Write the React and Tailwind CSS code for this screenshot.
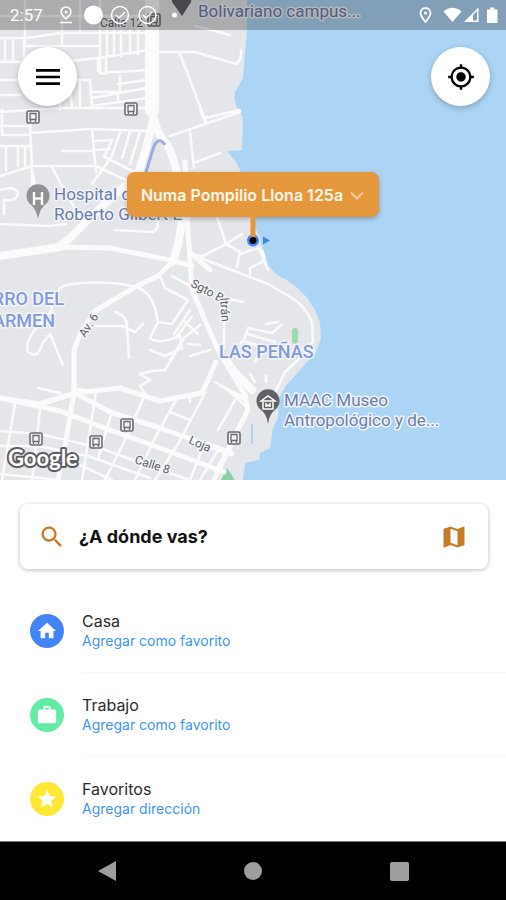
import React from "react";
import { MdHome, MdMap, MdMenu, MdMyLocation, MdSearch, MdStar, MdWork } from "react-icons/md";

const minorRoads = [
  // north-west blocks
  "M0 38H28L60 33H147M0 62H60L98 58L148 50M62 46H98M62 8V46H25V0M5 38V60M13 38V60M24 38V60M0 16H147M80 0V30M100 0V72M107 30V56M114 30V56M121 30V56M130 30V54M138 30V54",
  "M98 58V70Q100 76 107 72H118L147 70M106 58V74M78 80H90L92 108M80 82V106M70 92L72 108M120 76V92H92M92 98L147 88M118 84L147 80M118 92V100M92 106L147 98M60 88V110",
  "M0 112L60 108L146 108M0 80H20M0 95H20M2 110V135H30M0 126H30M0 146H30M30 124L32 170L36 190M6 146V170M18 146V166M25 146V166M30 133L92 129L146 131M92 130L96 172M62 151H94M96 141L112 140M96 150L110 149",
  "M120 132L112 156L92 184M130 132L122 158M140 132L130 164M105 157L136 173M112 140L104 157M0 176L32 166H96L134 184M52 167L64 190L82 220M32 170V190M0 190Q16 185 18 194Q16 202 4 200V214M0 224L50 226L66 224M115 230L152 232Q160 230 157 218",
  // north-east of the trunk road
  "M160 52H195L236 64Q242 61 241 50M180 54L206 122M195 26L230 35M170 136L240 112M190 132L194 168M196 162L220 153M200 110L206 124M205 118L240 110M188 180L195 190",
  "M217 217L226 244L242 234M226 244L240 252L237 267M192 254L203 256L226 244M190 254L268 284L292 298Q305 306 312 322L313 342Q307 350 298 360L285 372L273 397M240 254L257 248Q268 254 262 262L250 268V274M260 250L268 270",
  // hillside
  "M52 310V300Q56 286 72 284Q106 280 137 287Q150 292 155 308L158 322L150 338Q158 345 180 336L182 348L165 356L150 350M158 322L172 324L188 300L165 288L160 276M172 276L190 286M176 338L192 316M185 322L198 334M190 310L174 334M188 344L200 345",
  "M52 310L38 326Q24 342 28 352Q38 360 42 344L50 334L60 358L63 365M115 312Q128 316 127 328L129 358M92 326H122L135 332L143 324M72 388L86 390",
  "M248 328L244 340L240 344M248 328L272 333L281 325M266 324L278 322M248 334L275 342M246 342L262 347L255 362M200 325L184 338L170 360M226 298L243 302M224 312V348M190 356L210 350M250 374L255 382M266 376V382",
  "M180 345L165 370L152 371L140 374L150 380L140 386L145 394L132 424",
  // southern grid
  "M38 388L60 393M15 404L2 480M40 410L32 480M96 392L82 480M112 412L98 458M145 394L130 430L105 480M176 400L155 438L135 480M190 396L190 402M215 382L235 394M235 400L218 430M170 412L190 420M205 393L178 444L155 480M232 452L205 442L190 480M218 450L200 480",
  "M0 431L40 434M40 434L100 448L160 470L190 480M0 446H38L88 456L150 478M78 464L112 480M0 474L60 480",
  "M245 398L225 388L248 408L215 472M234 395L247 401",
];

const mainRoads = [
  "M0 256L60 247L110 248L170 260L192 266",
  "M172 262L158 276L135 287L95 311L80 334L74 350L74 392L66 440L58 480",
  "M0 398L40 404L75 393L120 388L160 401L202 393L216 362",
  "M0 398L60 411L110 430L160 448L224 472",
  "M75 393L110 412L160 428L232 454",
  "M185 162L187 217L192 290L218 350L236 380L245 395L248 410L238 430L214 480",
  "M192 254L210 270",
];

function Bus({ x, y }) {
  return (
    <g transform={`translate(${x} ${y})`} fill="none" stroke="#696b70" strokeWidth="1.6">
      <rect x="-6" y="-6" width="12" height="12" rx="1.5" fill="#f1f2f4" />
      <path d="M-3 -3.500H3V2.500H-3ZM-2.500 2V5M2.500 2V5" strokeWidth="1.300" />
    </g>
  );
}

function MapCanvas() {
  return (
    <svg
      className="absolute inset-0 h-full w-full"
      viewBox="0 0 506 480"
      preserveAspectRatio="xMidYMin slice"
      role="img"
      aria-label="Mapa"
      fontFamily="Roboto, sans-serif"
    >
      <rect width="506" height="480" fill="#acd5f5" />
      <path
        d="M0 0H247V30L243 78L235 92Q233 102 239 110L243 118L242 150L227 151L236 162L243 176L252 218L262 245L268 265L276 274L290 282Q306 294 314 308L320 322L321 338L316 352L300 370L285 387L279 398L278 418L273 428L270 448L260 453L259 460L245 463L243 480H0Z"
        fill="#e5e6e9"
      />
      <path d="M252 424V444" stroke="#acd5f5" strokeWidth="2" />
      <path d="M295 331V341" stroke="#9bdcab" strokeWidth="6" strokeLinecap="round" />
      <path d="M227 468L235 480H221Z" fill="#88cfa4" />
      <g fill="none" stroke="#fbfbfd" strokeLinejoin="round" strokeLinecap="round">
        {minorRoads.map((d) => (
          <path key={d} d={d} strokeWidth="2.6" />
        ))}
        {mainRoads.map((d) => (
          <path key={d} d={d} strokeWidth="5" />
        ))}
        <path d="M0 256L60 247" strokeWidth="8" />
        <path d="M152 0V110Q155 132 168 146Q180 170 182 217Q180 245 172 262" strokeWidth="8" />
        <path d="M152 0V110" strokeWidth="14" />
        <path d="M153 120Q146 150 138 174L97 211L70 238L60 246" strokeWidth="8" />
        <path d="M226 360L234 371L252 390" strokeWidth="8" />
      </g>
      <path d="M146 172L154 146Q159 136 165 145" fill="none" stroke="#9cabdb" strokeWidth="3" />

      <Bus x={33} y={117} />
      <Bus x={131} y={109} />
      <Bus x={154} y={20} />
      <Bus x={127} y={425} />
      <Bus x={36} y={439} />
      <Bus x={96} y={442} />
      <Bus x={234} y={438} />

      <path d="M171 -6H192L191 2L182 16L172 2Z" fill="#606266" />
      <path d="M38 219Q36 208 30 204A11.500 11.500 0 1 1 46 204Q40 208 38 219Z" fill="#909296" />
      <path d="M34 192V205M42 192V205M34 198.500H42" stroke="#fff" strokeWidth="2.400" />
      <path d="M268 424Q267 414 260 409A11.500 11.500 0 1 1 276 409Q269 414 268 424Z" fill="#606266" />
      <path
        d="M261 401L268 396L275 401ZM263 402V409H273V402M266 407V404L268 406L270 404V407"
        fill="none"
        stroke="#fff"
        strokeWidth="1.500"
      />

      <g stroke="#f4f5f8" strokeWidth="3" strokeLinejoin="round" paintOrder="stroke">
        <g fill="#6a7bb0" fontSize="17">
          <text x="198" y="17">Bolivariano campus...</text>
          <text x="54" y="200">Hospital de</text>
          <text x="54" y="220">Roberto Gilbert E</text>
          <text x="284" y="406">MAAC Museo</text>
          <text x="284" y="426">Antropológico y de...</text>
        </g>
        <g fill="#8299dd" fontSize="18" fontWeight="500">
          <text x="219" y="358">LAS PEÑAS</text>
          <text x="64" y="305" textAnchor="end">RRO DEL</text>
          <text x="55" y="327" textAnchor="end">ARMEN</text>
        </g>
        <g fill="#5d5f64" fontSize="12">
          <text x="100" y="27">Calle 12</text>
          <text transform="translate(85 338) rotate(-57)">Av. 6</text>
          <text transform="translate(190 286) rotate(28)">Sgto Be</text>
          <text transform="translate(220 298) rotate(86)">ltrán</text>
          <text transform="translate(188 443) rotate(24)">Loja</text>
          <text transform="translate(134 463) rotate(18)">Calle 8</text>
        </g>
      </g>
      <text
        x="8"
        y="466"
        fontFamily="Lato, sans-serif"
        fontSize="22"
        fontWeight="700"
        fill="#fff"
        stroke="#5c5d60"
        strokeWidth="4"
        strokeLinejoin="round"
        paintOrder="stroke"
      >
        Google
      </text>
    </svg>
  );
}

function StatusBar() {
  return (
    <div className="flex h-[30px] items-center bg-black/25 pl-2.5 pr-2 text-white">
      <span className="font-[Roboto,sans-serif] text-[17px] leading-5">2:57</span>
      <svg className="ml-3 h-5 w-[124px]" viewBox="0 0 124 20" fill="none" stroke="#fff" strokeWidth="1.500" aria-hidden="true">
        <path d="M11 14Q6 9 6 7A5 5 0 0 1 16 7Q16 9 11 14ZM5 17.500H17" />
        <circle cx="11" cy="7" r="1.500" fill="#fff" stroke="none" />
        <circle cx="38.500" cy="10" r="9.500" fill="#fff" stroke="none" />
        <circle cx="65" cy="10" r="8.500" />
        <path d="M61 10L64 13L70 7" />
        <circle cx="92.500" cy="10" r="8.500" />
        <path d="M88 10L91 13L97 7" />
        <circle cx="119.500" cy="10" r="2.500" fill="#fff" stroke="none" />
      </svg>
      <svg className="ml-auto h-5 w-20" viewBox="0 0 80 20" fill="none" stroke="#fff" strokeWidth="1.800" aria-hidden="true">
        <path d="M7.500 17Q2.500 11 2.500 8A5 5 0 0 1 12.500 8Q12.500 11 7.500 17Z" />
        <circle cx="7.500" cy="8" r="1.500" fill="#fff" stroke="none" />
        <path d="M25.500 6.500Q34.500 -1 43.500 6.500L34.500 17Z" fill="#fff" stroke="none" />
        <path d="M46 17L60.500 2.500V17Z" fill="#fff" stroke="none" />
        <path d="M55 10L59 6V15.500H55Z" fill="#7f9fb8" stroke="none" />
        <path d="M69 4.500H72V2.500H76.500V4.500H79.500V18H69Z" fill="#fff" stroke="none" />
      </svg>
    </div>
  );
}

function RoundButton({ label, children }) {
  return (
    <button
      type="button"
      aria-label={label}
      className="flex h-[59px] w-[59px] items-center justify-center rounded-full bg-white text-black shadow-[0_2px_6px_rgba(0,0,0,0.25)]"
    >
      {children}
    </button>
  );
}

const places = [
  { title: "Casa", action: "Agregar como favorito", Icon: MdHome, color: "bg-[#4285f9]" },
  { title: "Trabajo", action: "Agregar como favorito", Icon: MdWork, color: "bg-[#61eba5]" },
  { title: "Favoritos", action: "Agregar dirección", Icon: MdStar, color: "bg-[#ffe735]" },
];

export default function App() {
  return (
    <div className="flex min-h-screen flex-col bg-white font-[Inter,sans-serif]">
      <section className="relative h-[480px] overflow-hidden">
        <MapCanvas />
        <div className="relative">
          <StatusBar />
          <div className="flex justify-between pl-[18px] pr-4 pt-[17px]">
            <RoundButton label="Menú">
              <MdMenu size={32} />
            </RoundButton>
            <RoundButton label="Mi ubicación">
              <MdMyLocation size={28} />
            </RoundButton>
          </div>
          <div className="mt-[66px] flex flex-col items-center">
            <button
              type="button"
              className="flex h-[45px] items-center gap-1.5 rounded-lg bg-[#e5973c] px-3.5 text-base font-semibold text-[#fff7ec] shadow-[0_2px_5px_rgba(0,0,0,0.25)]"
            >
              Numa Pompilio Llona 125a
              <svg className="h-4 w-4" viewBox="0 0 16 16" fill="none" stroke="#f3cc9b" strokeWidth="2" aria-hidden="true">
                <path d="M2 5.500L8 11.500L14 5.500" />
              </svg>
            </button>
            <svg className="h-8 w-10" viewBox="0 0 40 32" aria-hidden="true">
              <circle cx="20" cy="23.500" r="8" fill="#d9e6f8" />
              <circle cx="20" cy="23.500" r="6" fill="#4285f4" />
              <path d="M20 0V21" stroke="#e5973c" strokeWidth="5" />
              <circle cx="20" cy="23.500" r="3.500" fill="#000" />
              <path d="M30 19.500L37 23.500L30 27.500Z" fill="#3b86f0" />
            </svg>
          </div>
        </div>
      </section>

      <main className="flex-1">
        <label className="ml-5 mr-[18px] mt-6 flex h-[65px] items-center rounded-lg bg-white pl-[18px] pr-5 shadow-[0_1px_4px_rgba(0,0,0,0.28)]">
          <MdSearch size={28} color="#c67c25" aria-hidden="true" />
          <input
            type="text"
            aria-label="¿A dónde vas?"
            placeholder="¿A dónde vas?"
            className="ml-[13px] min-w-0 flex-1 bg-transparent text-lg font-bold text-black outline-none placeholder:text-[#111111] placeholder:opacity-100"
          />
          <button type="button" aria-label="Elegir en el mapa" className="text-[#c67c25]">
            <MdMap size={28} />
          </button>
        </label>

        <ul className="mt-5 pl-[30px]">
          {places.map(({ title, action, Icon, color }, i) => (
            <li key={title}>
              <button type="button" className="flex w-full items-center gap-[18px] text-left">
                <span className={`flex h-[34px] w-[34px] shrink-0 items-center justify-center rounded-full text-white ${color}`}>
                  <Icon size={22} />
                </span>
                <span
                  className={`flex h-[84px] flex-1 flex-col justify-center border-b ${
                    i < places.length - 1 ? "border-[#f7f7f7]" : "border-transparent"
                  }`}
                >
                  <span className="text-base leading-5 text-[#2b2b2b]">{title}</span>
                  <span className="text-sm leading-5 text-[#3d94f2]">{action}</span>
                </span>
              </button>
            </li>
          ))}
        </ul>
      </main>

      <nav className="grid h-[59px] grid-cols-3 border-t border-[#777777] bg-black px-[34px]">
        <button type="button" aria-label="Atrás" className="flex items-center justify-center">
          <svg className="h-5 w-5" viewBox="0 0 20 20" fill="#9e9e9e">
            <path d="M1 10L19 0V20Z" />
          </svg>
        </button>
        <button type="button" aria-label="Inicio" className="flex items-center justify-center">
          <span className="h-[18px] w-[18px] rounded-full bg-[#9e9e9e]" />
        </button>
        <button type="button" aria-label="Recientes" className="flex items-center justify-center">
          <span className="h-[19px] w-[19px] rounded-xs bg-[#9e9e9e]" />
        </button>
      </nav>
    </div>
  );
}
